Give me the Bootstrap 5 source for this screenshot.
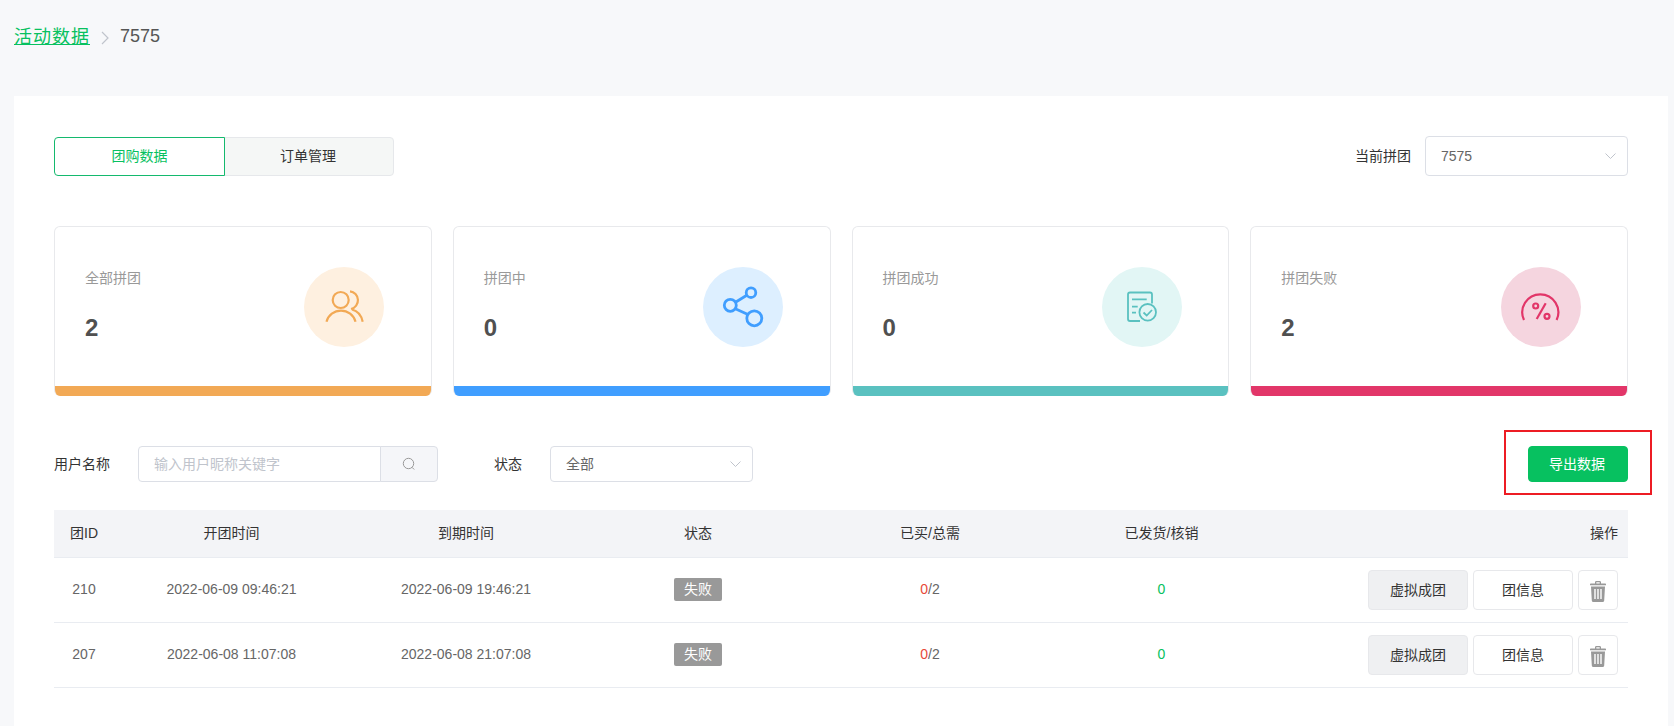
<!DOCTYPE html>
<html lang="zh-CN">
<head>
<meta charset="utf-8">
<title>活动数据</title>
<link href="https://cdn.jsdelivr.net/npm/bootstrap@5.3.0/dist/css/bootstrap.min.css" rel="stylesheet">
<style>
html,body{height:726px;overflow:hidden}
body{background:#f7f8fa;font-family:"Liberation Sans","Noto Sans CJK SC",sans-serif;font-size:14px;color:#333}
.crumbs{height:96px;padding:27px 0 0 14px;margin:0;font-size:18px;line-height:20px;align-items:flex-start;--bs-breadcrumb-margin-bottom:0;--bs-breadcrumb-item-padding-x:0}
.crumbs .breadcrumb-item+.breadcrumb-item::before{display:none}
.crumbs a{color:#07c160;letter-spacing:1px}
.crumbs .now{color:#555;display:flex;align-items:center;margin-top:-1px}
.crumbs svg{margin:3px 11px 0 11px}
.sheet{margin:0 6px 0 14px;height:630px;background:#fff;padding:40px 40px 0 40px}
.tab-pair{height:39px}
.tab-pair .btn{font-size:14px;padding:0;line-height:37px;--bs-btn-border-radius:4px}
.tab-on{width:171px;color:#07c160;background:#fff;border-color:#14b96e;z-index:1}
.tab-pair .tab-off{width:170px;color:#333;background:#f5f7f6;border-color:#e6e8eb;padding-right:2px}
.tab-on:hover{color:#07c160;background:#fff;border-color:#14b96e}
.tab-off:hover{color:#333;background:#f5f7f6;border-color:#e6e8eb}
.head-row{height:40px}
.head-gap{gap:14px}
.pick{height:40px;width:203px;font-size:14px;color:#666;padding:0 30px 0 15px;border-color:#dcdfe6;border-radius:4px;background-image:url("data:image/svg+xml,%3Csvg xmlns='http://www.w3.org/2000/svg' viewBox='0 0 11 6'%3E%3Cpath d='M.5.5l5 5 5-5' fill='none' stroke='%23c0c4cc'/%3E%3C/svg%3E");background-size:11px 6px;background-position:right 11px center}
.pick-low{height:36px;width:203px}
.stat-grid{grid-template-columns:repeat(4,1fr);gap:21px;margin-top:50px}
.stat-box{height:170px;border:1px solid #e8e9ec;border-bottom:0;border-radius:6px;overflow:hidden;--bs-card-bg:#fff}
.stat-main{height:159px;padding:0 46.5px 0 30px}
.stat-text{padding-top:41px}
.stat-label{color:#999;line-height:20px}
.stat-num{font-size:24px;font-weight:700;line-height:29px;margin-top:25px;color:#505050}
.disc{width:80px;height:80px;border-radius:50%}
.stat-bar{height:10px;margin:0 -1px}
.tone-a .disc{background:#fef0e0}.tone-a .stat-bar{background:#f2a955}
.tone-b .disc{background:#ddefff}.tone-b .stat-bar{background:#409eff}
.tone-c .disc{background:#e2f6f5}.tone-c .stat-bar{background:#5ac1c0}
.tone-d .disc{background:#f5d5df}.tone-d .stat-bar{background:#e23669}
.filter-row{margin-top:50px;height:36px}
.seek{width:300px;height:36px;margin-left:28px}
.seek .form-control{font-size:14px;padding:0 15px;border-color:#dcdfe6;border-radius:4px 0 0 4px}
.seek .form-control::placeholder{color:#c0c4cc}
.seek .btn{width:58px;padding:0;background:#f5f6f9;border-color:#dcdfe6;border-radius:0 4px 4px 0;display:flex;align-items:center;justify-content:center}
.state-label{margin:0 28px 0 56px}
.export-wrap{position:relative}
.export-btn{width:100px;height:36px;padding:0 2px 0 0;font-size:14px;color:#fff;background:#07c160;border-color:#07c160;border-radius:4px;--bs-btn-hover-bg:#07c160;--bs-btn-hover-color:#fff}
.mark-box{position:absolute;left:-24px;right:-24px;top:-16px;bottom:-13px;border:2px solid #ed1c24;pointer-events:none}
.data-table{margin:28px 0 0;table-layout:fixed;width:100%;font-size:14px}
.data-table th{height:47px;padding:0;vertical-align:middle;font-weight:400;background:#f3f4f7;color:#333;border-bottom:1px solid #e9ecf1;text-align:center}
.data-table td{height:65px;padding:0;vertical-align:middle;color:#666;border-bottom:1px solid #e9ecf1;text-align:center}
.data-table .end{text-align:right;padding-right:10px}
.w-a{width:60px}.w-b{width:235px}.w-c{width:234px}.w-d{width:230px}.w-e{width:234px}.w-f{width:229px}
.fail-tag{display:inline-block;width:48px;height:23px;line-height:23px;padding:0;font-size:14px;font-weight:400;background:#999;color:#fff;border-radius:2px}
.red-n{color:#e8493a}
.data-table td.green-n{color:#07c160}
.op{height:40px;padding:2px 0 0;font-size:14px;color:#333;border:1px solid #e7e8eb;border-radius:4px;margin-left:5px;--bs-btn-hover-color:#333}
.op-w{width:100px}
.op-grey{background:#eff0f2;--bs-btn-hover-bg:#eff0f2;--bs-btn-hover-border-color:#e7e8eb}
.op-white{background:#fff;--bs-btn-hover-bg:#fff;--bs-btn-hover-border-color:#e7e8eb}
.op-icon{width:40px;vertical-align:top;line-height:1;padding-top:4px}
.op-row{font-size:0;white-space:nowrap}
</style>
</head>
<body>
<ol class="breadcrumb crumbs">
  <li class="breadcrumb-item"><a href="#">活动数据</a></li>
  <li class="breadcrumb-item now">
    <svg width="8" height="14" viewBox="0 0 8 14"><path d="M1 1l6 6-6 6" fill="none" stroke="#c0c4cc" stroke-width="1.2"/></svg>7575
  </li>
</ol>
<main class="sheet">
  <div class="d-flex justify-content-between align-items-end head-row">
    <div class="btn-group tab-pair">
      <button type="button" class="btn tab-on">团购数据</button>
      <button type="button" class="btn tab-off">订单管理</button>
    </div>
    <div class="d-flex align-items-center head-gap">
      <span>当前拼团</span>
      <select class="form-select pick"><option>7575</option></select>
    </div>
  </div>

  <div class="d-grid stat-grid">
    <div class="card stat-box tone-a">
      <div class="d-flex justify-content-between align-items-center stat-main">
        <div class="align-self-start stat-text"><div class="stat-label">全部拼团</div><div class="stat-num">2</div></div>
        <div class="disc d-flex align-items-center justify-content-center">
          <svg width="48" height="48" viewBox="0 0 48 48" fill="none" stroke="#f2a955" stroke-width="2.200"><circle cx="20.7" cy="17" r="8"/><path d="M6.500 38.700a15 15 0 0 1 29 0"/><path d="M30 8.300a9 9 0 0 1 1 17.700"/><path d="M32 26.500c6 1.500 9.500 6.500 10.700 12.200"/></svg>
        </div>
      </div>
      <div class="stat-bar"></div>
    </div>
    <div class="card stat-box tone-b">
      <div class="d-flex justify-content-between align-items-center stat-main">
        <div class="align-self-start stat-text"><div class="stat-label">拼团中</div><div class="stat-num">0</div></div>
        <div class="disc d-flex align-items-center justify-content-center">
          <svg width="48" height="48" viewBox="0 0 48 48" fill="none" stroke="#409eff" stroke-width="2.800"><circle cx="32" cy="9.700" r="4.800"/><circle cx="11.300" cy="22.300" r="6"/><circle cx="35.300" cy="35.300" r="7.500"/><path d="M16.500 19.300l11.300-7M16.300 25.700l12.700 5.800"/></svg>
        </div>
      </div>
      <div class="stat-bar"></div>
    </div>
    <div class="card stat-box tone-c">
      <div class="d-flex justify-content-between align-items-center stat-main">
        <div class="align-self-start stat-text"><div class="stat-label">拼团成功</div><div class="stat-num">0</div></div>
        <div class="disc d-flex align-items-center justify-content-center">
          <svg width="48" height="48" viewBox="0 0 48 48" fill="none" stroke="#5ac1c0" stroke-width="1.800"><path d="M34 20.500V11.500a2 2 0 0 0-2-2H12a2 2 0 0 0-2 2V36a2 2 0 0 0 2 2h10"/><circle cx="29.700" cy="29.300" r="8.300"/><path d="M25.500 29.500l3.200 3 5.300-5.500M14 16.300h14.700M14 23.700h5.700M14 29.700h4"/></svg>
        </div>
      </div>
      <div class="stat-bar"></div>
    </div>
    <div class="card stat-box tone-d">
      <div class="d-flex justify-content-between align-items-center stat-main">
        <div class="align-self-start stat-text"><div class="stat-label">拼团失败</div><div class="stat-num">2</div></div>
        <div class="disc d-flex align-items-center justify-content-center">
          <svg width="48" height="48" viewBox="0 0 48 48" fill="none" stroke="#e23669" stroke-width="2.200"><path d="M7 37A18 18 0 1 1 39.600 37"/><path d="M28.700 20.300L19.700 36"/><circle cx="18.700" cy="23" r="2.500"/><circle cx="30" cy="33.300" r="2.500"/></svg>
        </div>
      </div>
      <div class="stat-bar"></div>
    </div>
  </div>

  <div class="d-flex align-items-center justify-content-between filter-row">
    <div class="d-flex align-items-center">
      <span>用户名称</span>
      <div class="input-group seek">
        <input type="text" class="form-control" placeholder="输入用户昵称关键字">
        <button type="button" class="btn" aria-label="搜索">
          <svg width="14" height="14" viewBox="0 0 14 14" fill="none" stroke="#999" stroke-width="1"><circle cx="6.500" cy="6.500" r="5.200"/><path d="M10 10.300l2.200 2.200"/></svg>
        </button>
      </div>
      <span class="state-label">状态</span>
      <select class="form-select pick pick-low"><option>全部</option></select>
    </div>
    <div class="export-wrap">
      <button type="button" class="btn export-btn">导出数据</button>
      <div class="mark-box"></div>
    </div>
  </div>

  <table class="table data-table">
    <thead>
      <tr>
        <th class="w-a">团ID</th><th class="w-b">开团时间</th><th class="w-c">到期时间</th><th class="w-d">状态</th><th class="w-e">已买/总需</th><th class="w-f">已发货/核销</th><th class="end">操作</th>
      </tr>
    </thead>
    <tbody>
      <tr>
        <td>210</td><td>2022-06-09 09:46:21</td><td>2022-06-09 19:46:21</td>
        <td><span class="badge fail-tag">失败</span></td>
        <td><span class="red-n">0</span>/2</td><td class="green-n">0</td>
        <td class="end op-row">
          <button type="button" class="btn op op-w op-grey">虚拟成团</button><button type="button" class="btn op op-w op-white">团信息</button><button type="button" class="btn op op-icon op-white" aria-label="删除"><svg width="16" height="21" viewBox="0 0 16 21" fill="#999"><path d="M5 2.500V1.300C5 .6 5.600 0 6.300 0h3.400C10.400 0 11 .6 11 1.300v1.200h4.300c.4 0 .7.300.7.700v1H0v-1c0-.4.300-.7.700-.7zM6.300 1.300v1.200h3.400V1.300z"/><path d="M1 5.500h14l-.8 14c0 .8-.7 1.500-1.500 1.500H3.300c-.8 0-1.500-.7-1.500-1.500zM4.300 8v10h1.400V8zm3 0v10h1.400V8zm3 0v10h1.400V8z" fill-rule="evenodd"/></svg></button>
        </td>
      </tr>
      <tr>
        <td>207</td><td>2022-06-08 11:07:08</td><td>2022-06-08 21:07:08</td>
        <td><span class="badge fail-tag">失败</span></td>
        <td><span class="red-n">0</span>/2</td><td class="green-n">0</td>
        <td class="end op-row">
          <button type="button" class="btn op op-w op-grey">虚拟成团</button><button type="button" class="btn op op-w op-white">团信息</button><button type="button" class="btn op op-icon op-white" aria-label="删除"><svg width="16" height="21" viewBox="0 0 16 21" fill="#999"><path d="M5 2.500V1.300C5 .6 5.600 0 6.300 0h3.400C10.400 0 11 .6 11 1.300v1.200h4.300c.4 0 .7.300.7.700v1H0v-1c0-.4.300-.7.700-.7zM6.300 1.300v1.200h3.400V1.300z"/><path d="M1 5.500h14l-.8 14c0 .8-.7 1.500-1.500 1.500H3.300c-.8 0-1.500-.7-1.500-1.500zM4.300 8v10h1.400V8zm3 0v10h1.400V8zm3 0v10h1.400V8z" fill-rule="evenodd"/></svg></button>
        </td>
      </tr>
    </tbody>
  </table>
</main>
<script src="https://cdn.jsdelivr.net/npm/bootstrap@5.3.0/dist/js/bootstrap.bundle.min.js"></script>
</body>
</html>
